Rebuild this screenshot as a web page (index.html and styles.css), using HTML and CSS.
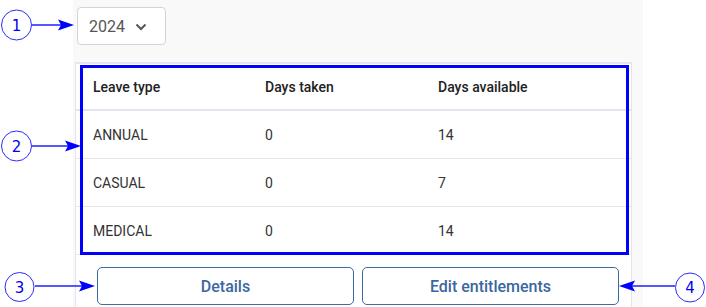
FILE: index.html
```html
<!doctype html>
<html lang="en">
<head>
    <meta charset="utf-8">
    <title>Leave entitlements</title>
    <link rel="stylesheet" href="styles.css">
</head>
<body>
    <div class="panel">
        <button class="year-select" type="button">
            <span>2024</span>
            <svg class="chevron" width="12" height="8" viewBox="0 0 12 8"><path d="M1.5 1.5 L6 6 L10.5 1.5" fill="none" stroke="#555" stroke-width="2"/></svg>
        </button>

        <div class="card">
            <table class="leave-table">
                <thead>
                    <tr>
                        <th>Leave type</th>
                        <th>Days taken</th>
                        <th>Days available</th>
                    </tr>
                </thead>
                <tbody>
                    <tr><td>ANNUAL</td><td>0</td><td>14</td></tr>
                    <tr><td>CASUAL</td><td>0</td><td>7</td></tr>
                    <tr><td>MEDICAL</td><td>0</td><td>14</td></tr>
                </tbody>
            </table>
            <div class="actions">
                <button class="btn" type="button">Details</button>
                <button class="btn" type="button">Edit entitlements</button>
            </div>
        </div>
    </div>

    <!-- Annotation overlay -->
    <svg class="annotations" width="706" height="307" viewBox="0 0 706 307">
        <rect x="81.5" y="66.5" width="546" height="187" fill="none" stroke="#0000ff" stroke-width="3"/>

        <g stroke="#1f1fff" stroke-width="1.5" fill="none">
            <line x1="32" y1="25" x2="62" y2="25"/>
            <line x1="32" y1="146" x2="68" y2="146"/>
            <line x1="35" y1="286" x2="82" y2="286"/>
            <line x1="675" y1="286" x2="632" y2="286"/>
        </g>
        <g fill="#0000ff">
            <polygon points="74,25 58,19.5 61,25 58,30.5"/>
            <polygon points="81,146 65,140.5 68,146 65,151.5"/>
            <polygon points="95,286 79,280.5 82,286 79,291.5"/>
            <polygon points="619,286 635,280.5 632,286 635,291.5"/>
        </g>

        <g fill="#fff" stroke="#2b2bff" stroke-width="1">
            <circle cx="16.5" cy="25" r="15"/>
            <circle cx="16.5" cy="146" r="15"/>
            <circle cx="19.5" cy="287" r="14.5"/>
            <circle cx="690" cy="287.5" r="14.5"/>
        </g>
        <g class="num" fill="#0000ee" text-anchor="middle">
            <text x="16.5" y="30.5">1</text>
            <text x="16.5" y="151.5">2</text>
            <text x="19.5" y="292.5">3</text>
            <text x="690" y="293">4</text>
        </g>
    </svg>
</body>
</html>
```

FILE: styles.css
```css
body {
    margin: 0;
    padding: 0;
    background-color: #fff;
    font-family: Roboto, "Noto Sans", Arial, sans-serif;
    height: 307px;
    overflow: hidden;
}
.panel {
    margin-left: 73px;
    width: 570px;
    height: 307px;
    background-color: #f9f9fa;
    padding-top: 7px;
    box-sizing: border-box;
}
.year-select {
    display: flex;
    align-items: center;
    gap: 10px;
    margin-left: 4px;
    width: 89px;
    height: 38px;
    padding: 0 0 0 11px;
    background-color: #fff;
    border: 1px solid #d4d4d4;
    border-radius: 4px;
    font-family: inherit;
    font-size: 16px;
    color: #555;
    box-sizing: border-box;
}
.chevron {
    margin-top: 2px;
}
.card {
    margin-top: 17px;
    margin-left: 2px;
    width: 557px;
    height: 245px;
    background-color: #fff;
    border: 1px solid #e4e4ea;
    border-top: 2px solid #e6e6ee;
    border-bottom: none;
    box-sizing: border-box;
}
.leave-table {
    width: 100%;
    border-collapse: collapse;
    table-layout: fixed;
    font-size: 14px;
}
.leave-table th,
.leave-table td {
    text-align: left;
    padding: 0;
}
.leave-table th:first-child,
.leave-table td:first-child {
    padding-left: 17px;
    width: 172px;
}
.leave-table th:nth-child(2),
.leave-table td:nth-child(2) {
    width: 173px;
}
.leave-table th {
    height: 45px;
    font-weight: 500;
    color: #222;
    border-bottom: 2px solid #e4e4ee;
}
.leave-table td {
    height: 47px;
    color: #333;
    border-bottom: 1px solid #e6e6e6;
}
.actions {
    display: flex;
    gap: 8px;
    padding: 12px 12px 0 21px;
}
.btn {
    flex: 1;
    height: 38px;
    background-color: #fff;
    border: 1px solid #3a6aa0;
    border-radius: 5px;
    font-family: inherit;
    font-size: 16px;
    font-weight: 500;
    color: #3a67a0;
    cursor: pointer;
}
.annotations {
    position: absolute;
    left: 0;
    top: 0;
    pointer-events: none;
}
.num {
    font-family: "DejaVu Sans", sans-serif;
    font-size: 15px;
}
```
